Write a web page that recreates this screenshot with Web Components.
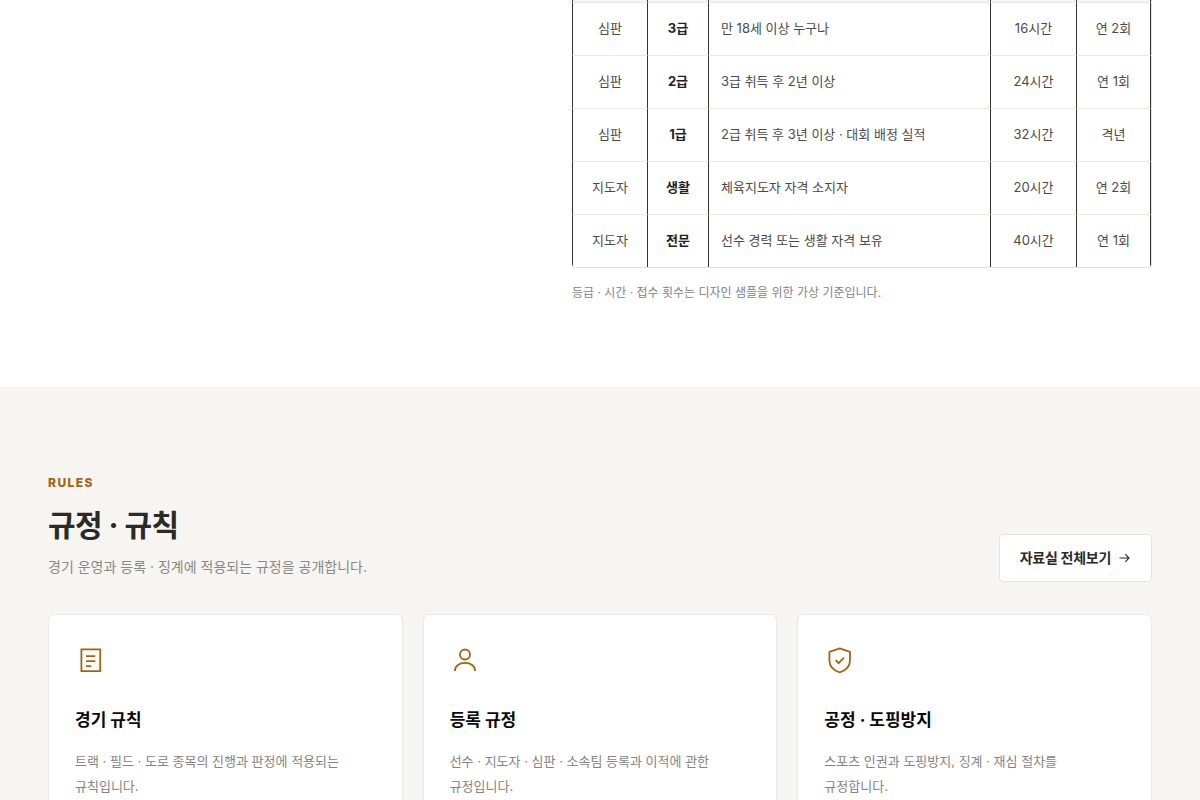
<!DOCTYPE html>
<html lang="ko">
<head>
<meta charset="utf-8">
<meta name="viewport" content="width=device-width, initial-scale=1">
<title>규정 · 규칙</title>
<style>
body { margin: 0; background: #fff; color: #2b2a27; font-family: Inter, "Noto Sans CJK KR", sans-serif; font-size: 14px; word-break: keep-all; }
</style>
</head>
<body>
<federation-page></federation-page>
<script>
const define = (name, html) => customElements.define(name, class extends HTMLElement {
  constructor() {
    super();
    this.attachShadow({ mode: "open" }).innerHTML = html;
  }
});

define("license-table", `
<style>
:host { display: block; }
.frame { border: 1px solid #e5e3de; border-top: 0; border-left: 0; border-radius: 0 0 4px 4px; overflow: hidden; }
table { width: 100%; border-collapse: separate; border-spacing: 0; table-layout: fixed; font-size: 13px; }
.kind { width: 76px; } .grade { width: 61px; } .hours { width: 86px; } .times { width: 74px; }
th, td { box-sizing: border-box; text-align: center; padding: 0 12px 2px; border-right: 1px solid #33322f; border-bottom: 1px solid #e9e8e4; }
th:first-child, td:first-child { border-left: 1px solid #33322f; }
thead th { height: 3px; background: #f6f5f2; }
tbody td, tbody th { height: 53px; line-height: 20px; color: #4b4a46; }
tbody th { font-weight: 700; color: #22211f; }
tbody td:nth-child(3) { text-align: left; }
tbody tr:last-child > * { border-bottom: 0; height: 52px; }
</style>
<div class="frame"><table aria-label="자격 기준">
<colgroup><col class="kind"><col class="grade"><col><col class="hours"><col class="times"></colgroup>
<thead><tr><th></th><th></th><th></th><th></th><th></th></tr></thead>
<tbody>
<tr><td>심판</td><th scope="row">3급</th><td>만 18세 이상 누구나</td><td>16시간</td><td>연 2회</td></tr>
<tr><td>심판</td><th scope="row">2급</th><td>3급 취득 후 2년 이상</td><td>24시간</td><td>연 1회</td></tr>
<tr><td>심판</td><th scope="row">1급</th><td>2급 취득 후 3년 이상 · 대회 배정 실적</td><td>32시간</td><td>격년</td></tr>
<tr><td>지도자</td><th scope="row">생활</th><td>체육지도자 자격 소지자</td><td>20시간</td><td>연 2회</td></tr>
<tr><td>지도자</td><th scope="row">전문</th><td>선수 경력 또는 생활 자격 보유</td><td>40시간</td><td>연 1회</td></tr>
</tbody></table></div>`);

define("section-heading", `
<style>
:host { display: flex; justify-content: space-between; align-items: flex-end; }
.eyebrow { margin: 0; font-size: 12px; line-height: 18px; font-weight: 800; letter-spacing: 0.12em; color: #a5650f; }
h2 { margin: 10px 0 0; font-size: 30px; line-height: 46px; font-weight: 700; letter-spacing: -0.02em; }
.lead { margin: 4px 0 0; font-size: 14px; line-height: 30px; color: #8a8883; }
</style>
<div><p class="eyebrow"><slot name="eyebrow"></slot></p><h2><slot></slot></h2><p class="lead"><slot name="lead"></slot></p></div>
<slot name="action"></slot>`);

define("link-button", `
<style>
:host { display: block; }
a { display: flex; align-items: center; gap: 8px; padding: 13px 20px; border: 1px solid #e5e3de; border-radius: 4px; background: #fff; color: #2b2a27; font-size: 14px; line-height: 20px; font-weight: 700; letter-spacing: -0.02em; text-decoration: none; }
svg { display: block; }
</style>
<a href="#archive"><slot></slot><svg width="12" height="14" viewBox="0 0 12 14" fill="none" stroke="currentColor" stroke-width="1.1" aria-hidden="true"><path d="M.5 7H10M6.300 3.200 10 7l-3.700 3.800"/></svg></a>`);

define("rule-card", `
<style>
:host { display: block; box-sizing: border-box; padding: 26px 32px 26px 26px; background: #fff; border: 1px solid #e9e8e4; border-radius: 6px; }
.icon { display: block; height: 38px; color: #a5650f; }
h3 { margin: 28px 0 0; font-size: 17px; line-height: 26px; font-weight: 700; color: #0a0a0a; }
p { margin: 16px 0 0; font-size: 13px; line-height: 25px; color: #85837e; }
</style>
<span class="icon"><slot name="icon"></slot></span><h3><slot name="title"></slot></h3><p><slot></slot></p>`);

define("federation-page", `
<style>
:host { display: block; height: 100vh; overflow: hidden; }
.wrap { padding: 0 48px; }
.license { display: grid; grid-template-columns: 484px minmax(0, 1fr); column-gap: 40px; padding-bottom: 84px; }
.license > div { grid-column: 2; }
.note { margin: 14px 0 0; font-size: 12px; line-height: 21px; color: #85837e; }
.rules { background: #f6f5f2; padding-top: 87px; padding-bottom: 88px; }
.cards { display: grid; grid-template-columns: repeat(3, minmax(0, 1fr)); gap: 20px; margin-top: 32px; }
svg { display: block; fill: none; stroke: currentColor; stroke-width: 1.8; }
</style>
<main>
<section class="wrap license"><div><license-table></license-table><p class="note">등급 · 시간 · 접수 횟수는 디자인 샘플을 위한 가상 기준입니다.</p></div></section>
<section class="wrap rules">
<section-heading><span slot="eyebrow">RULES</span>규정 · 규칙<span slot="lead">경기 운영과 등록 · 징계에 적용되는 규정을 공개합니다.</span><link-button slot="action">자료실 전체보기</link-button></section-heading>
<div class="cards">
<rule-card><svg slot="icon" width="30" height="38" viewBox="0 0 30 38" aria-hidden="true"><path d="M6.400 8.400h18.800v21.800H6.400zM11 15.100h9.300M11 20.100h9.300M11 25.100h5.300"/></svg><span slot="title">경기 규칙</span>트랙 · 필드 · 도로 종목의 진행과 판정에 적용되는 규칙입니다.</rule-card>
<rule-card><svg slot="icon" width="30" height="38" viewBox="0 0 30 38" aria-hidden="true"><circle cx="15" cy="13.500" r="5"/><path d="M4.900 30c0-5 4.400-8.200 10.100-8.200S25.100 25 25.100 30"/></svg><span slot="title">등록 규정</span>선수 · 지도자 · 심판 · 소속팀 등록과 이적에 관한 규정입니다.</rule-card>
<rule-card><svg slot="icon" width="30" height="38" viewBox="0 0 30 38" aria-hidden="true"><path d="M15.700 7.400 26 11v8.200c0 6-4.200 10.200-10.300 12.200C9.600 29.400 5.400 25.200 5.400 19.200V11zM11.600 19.100l3 3 5.300-5.400"/></svg><span slot="title">공정 · 도핑방지</span>스포츠 인권과 도핑방지, 징계 · 재심 절차를 규정합니다.</rule-card>
</div></section></main>`);
</script>
</body>
</html>
